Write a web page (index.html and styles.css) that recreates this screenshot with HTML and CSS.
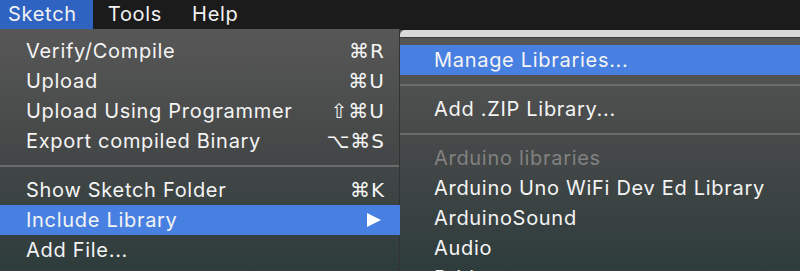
FILE: index.html
```html
<!DOCTYPE html>
<html lang="en">
<head>
  <meta charset="UTF-8" />
  <title>Sketch menu</title>
  <link rel="stylesheet" href="styles.css">
</head>
<body>

  <!-- Menu bar -->
  <div class="menubar">
    <div class="menubar-item active">Sketch</div>
    <div class="menubar-item">Tools</div>
    <div class="menubar-item">Help</div>
  </div>

  <div class="menus">
    <!-- Sketch menu -->
    <div class="menu main-menu">
      <div class="menu-item"><span>Verify/Compile</span><span class="shortcut">&#8984;R</span></div>
      <div class="menu-item"><span>Upload</span><span class="shortcut">&#8984;U</span></div>
      <div class="menu-item"><span>Upload Using Programmer</span><span class="shortcut">&#8679;&#8984;U</span></div>
      <div class="menu-item"><span>Export compiled Binary</span><span class="shortcut">&#8997;&#8984;S</span></div>
      <div class="separator"></div>
      <div class="menu-item"><span>Show Sketch Folder</span><span class="shortcut">&#8984;K</span></div>
      <div class="menu-item selected"><span>Include Library</span><span class="arrow"></span></div>
      <div class="menu-item"><span>Add File...</span></div>
    </div>

    <!-- Include Library submenu -->
    <div class="menu sub-menu">
      <div class="sub-top"></div>
      <div class="sub-items">
        <div class="menu-item selected">Manage Libraries...</div>
        <div class="separator"></div>
        <div class="menu-item">Add .ZIP Library...</div>
        <div class="separator"></div>
        <div class="menu-item disabled">Arduino libraries</div>
        <div class="menu-item">Arduino Uno WiFi Dev Ed Library</div>
        <div class="menu-item">ArduinoSound</div>
        <div class="menu-item">Audio</div>
        <div class="menu-item">Bridge</div>
      </div>
    </div>
  </div>

</body>
</html>
```

FILE: styles.css
```css
* {
  box-sizing: border-box;
}

body {
  margin: 0;
  height: 271px;
  overflow: hidden;
  background: #1b1b1b;
  font-family: Inter, "Liberation Sans", "DejaVu Sans", sans-serif;
  font-size: 20px;
  letter-spacing: 0.7px;
  color: #f4f4f4;
}

.menubar {
  display: flex;
  height: 29px;
  background: #1b1b1b;
}

.menubar-item {
  padding: 0 15px;
  line-height: 29px;
  color: #f2f2f2;
}

.menubar-item.active {
  background: #2f63c2;
  padding: 0 16px 0 8px;
}

.menus {
  display: flex;
  height: 242px;
}

.menu {
  background: linear-gradient(#575757, #474949 45%, #2e3c3c);
}

.main-menu {
  width: 400px;
  padding-top: 7px;
  border-right: 1px solid #333;
}

.menu-item {
  display: flex;
  justify-content: space-between;
  align-items: center;
  height: 30px;
  padding: 0 15px 0 26px;
  white-space: nowrap;
}

.menu-item.selected {
  background: #4880e2;
}

.main-menu .menu-item.selected {
  margin-right: -1px;
}

.shortcut {
  font-family: "DejaVu Sans", sans-serif;
  font-size: 20px;
  letter-spacing: 1px;
  margin-right: -1px;
}

.arrow {
  width: 0;
  height: 0;
  margin-right: 4px;
  border-top: 7px solid transparent;
  border-bottom: 7px solid transparent;
  border-left: 14px solid #fff;
}

.separator {
  height: 19px;
  padding-top: 9px;
}

.separator::after {
  content: "";
  display: block;
  height: 2px;
  background: #6b6b6b;
}

.sub-menu {
  flex: 1;
  margin-top: 1px;
}

.sub-top {
  height: 8px;
  background: #d9d9d9;
  border-top-left-radius: 5px;
  border-bottom: 1px solid #3a3a3a;
}

.sub-items {
  padding-top: 7px;
}

.sub-items .menu-item {
  padding-left: 34px;
}

.menu-item.disabled {
  color: #818181;
}
```
